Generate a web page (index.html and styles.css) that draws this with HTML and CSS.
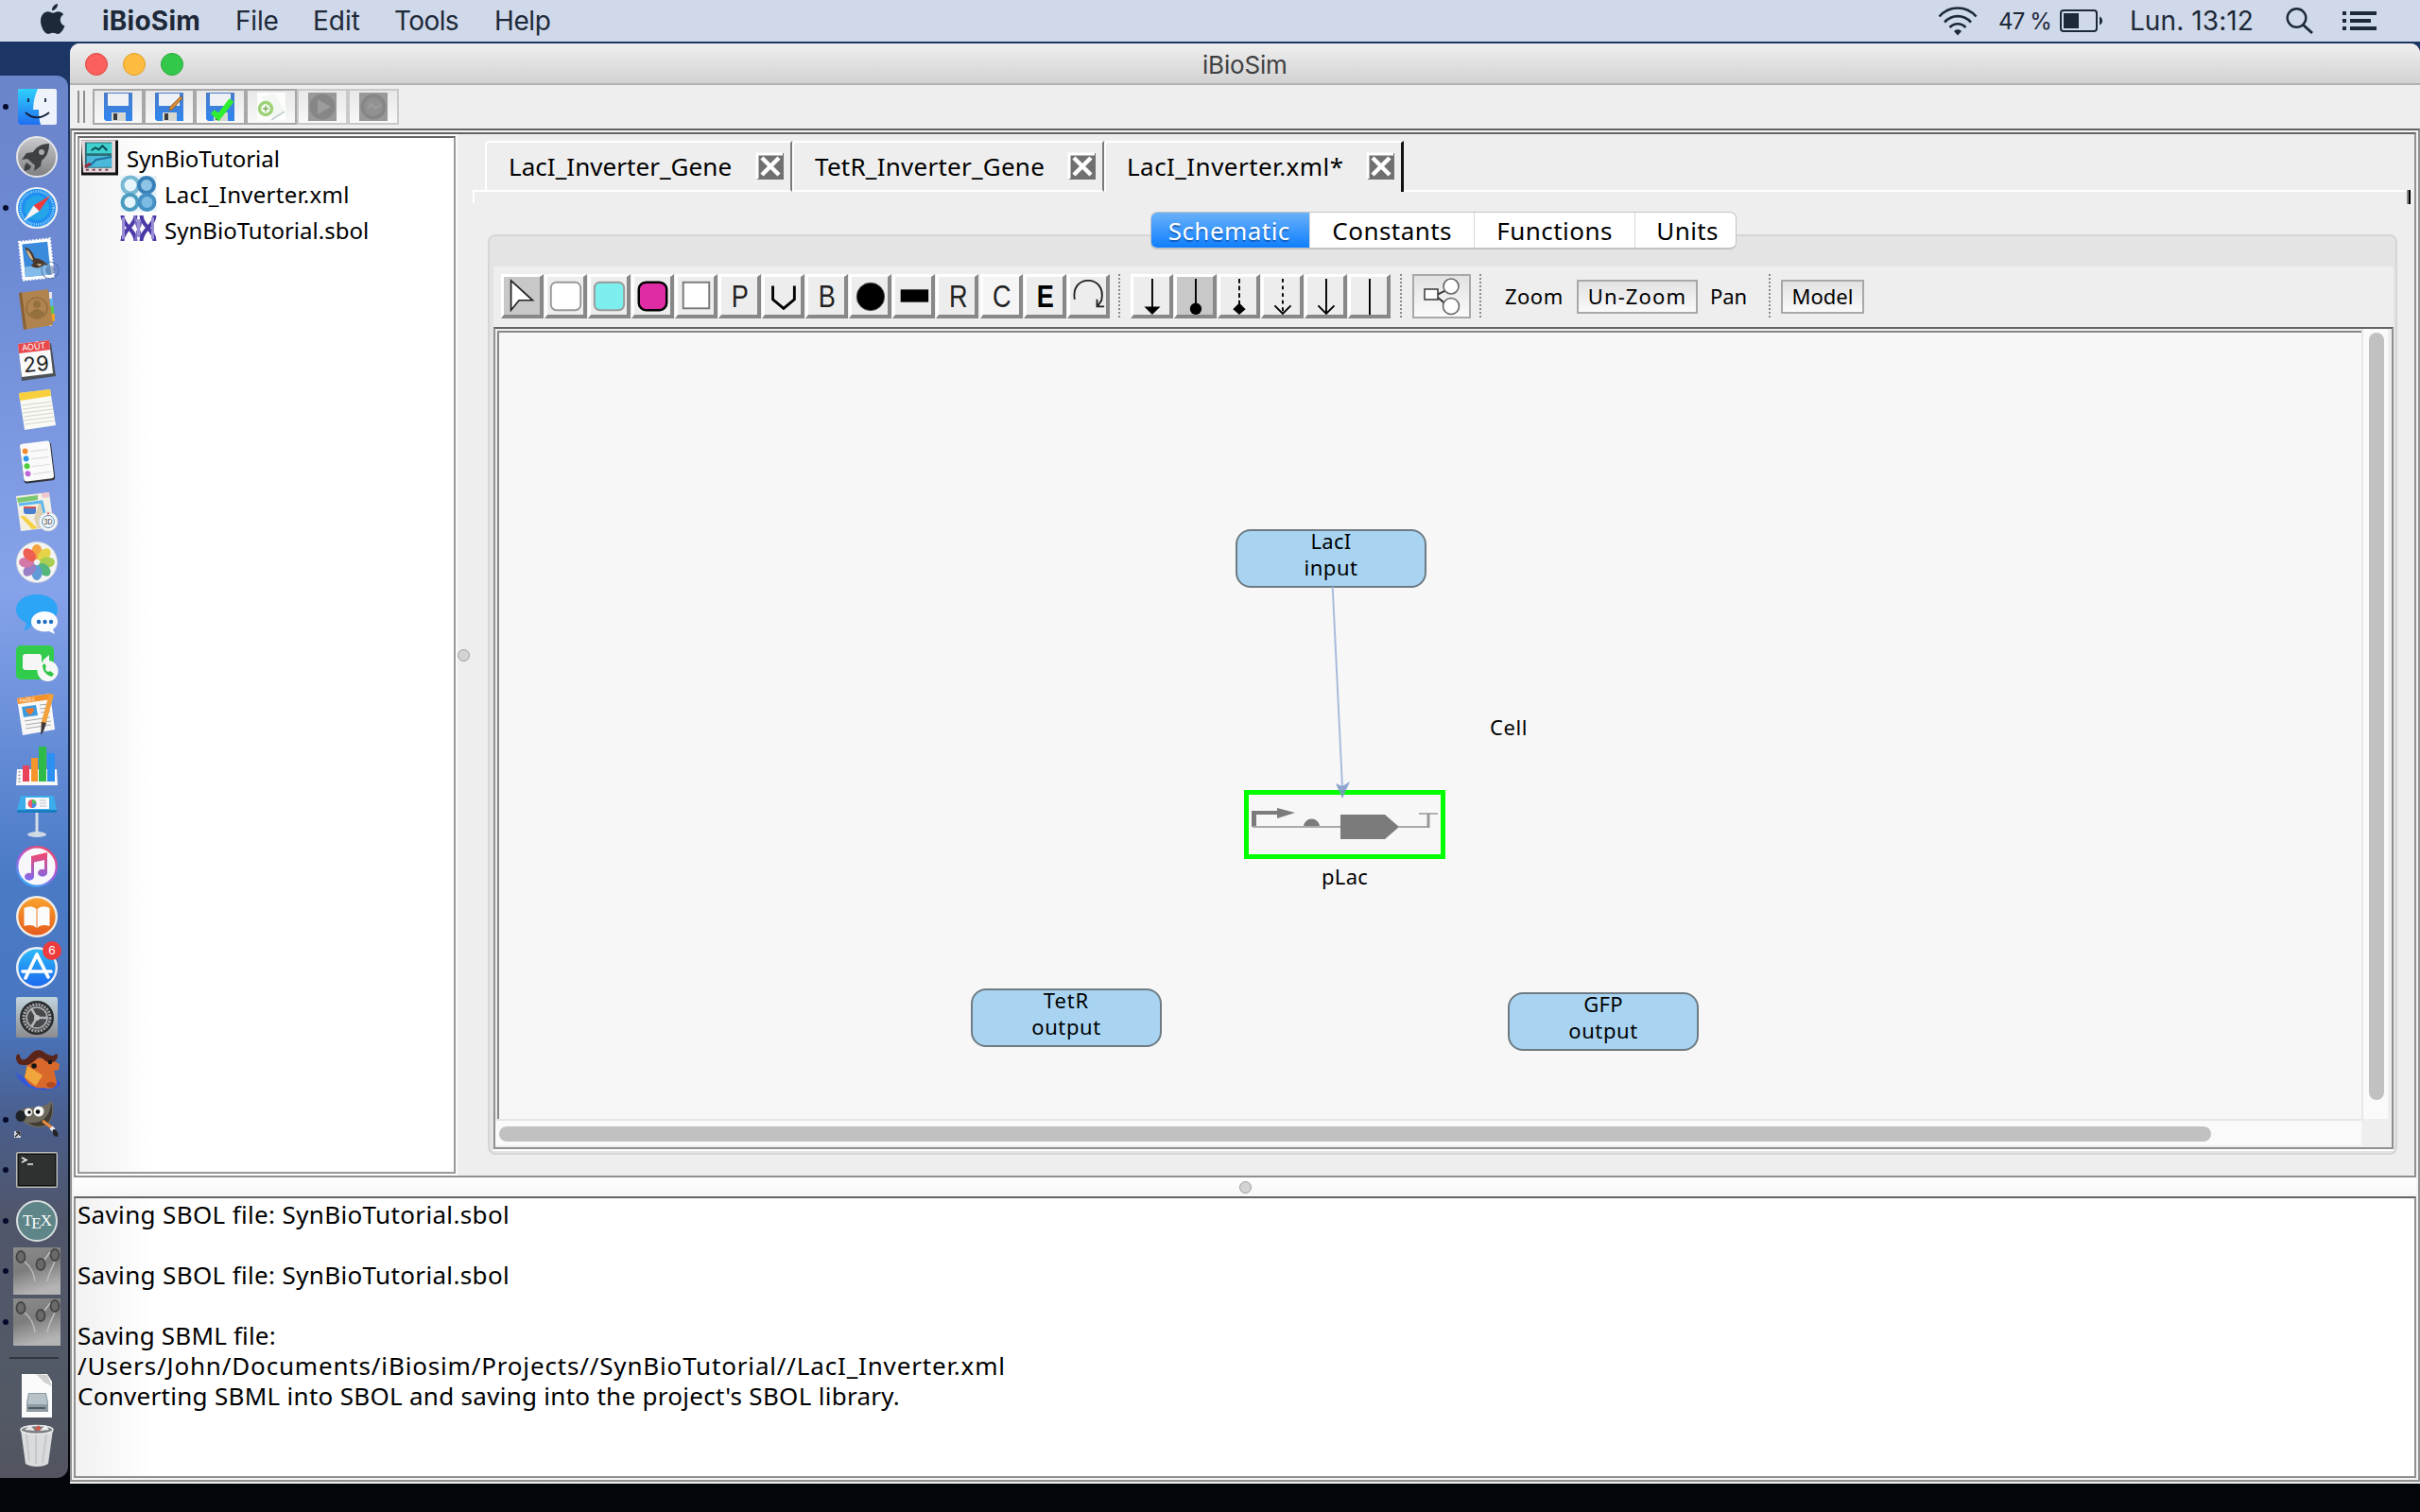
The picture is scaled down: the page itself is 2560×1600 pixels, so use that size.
FILE: index.html
```html
<!DOCTYPE html>
<html lang="en">
<head>
<meta charset="utf-8">
<title>iBioSim</title>
<link rel="stylesheet" href="styles.css">
</head>
<body>
<header class="menubar">
  <svg class="apple" viewBox="0 0 26 32"><path d="M18 0c.4 3.600-2.600 7-6 7.200C11.500 3.800 14.800.4 18 0zM18.500 8.300c2.300 0 4.400 1.200 5.700 3-5.200 3.200-4.200 10.200 1.300 12.300C24 27.600 21 32 18.300 32c-2 0-2.800-1.200-5.200-1.200S9.800 32 8 32C4.200 32 0 24.500 0 18.300 0 12 3.800 8.300 7.600 8.300c2.300 0 4 1.500 5.500 1.500s3.100-1.500 5.400-1.500z"/></svg>
  <span class="m m-app">iBioSim</span>
  <span class="m m-file">File</span>
  <span class="m m-edit">Edit</span>
  <span class="m m-tools">Tools</span>
  <span class="m m-help">Help</span>
  <svg class="wifi" viewBox="0 0 42 32"><g fill="none" stroke="#1d2838" stroke-width="2.600"><path d="M1.500 11.500C12-.5 30-.5 40.500 11.500"/><path d="M7 17.500c8-8.500 20-8.500 28 0"/><path d="M12.500 23c5-5 12-5 17 0"/></g><path d="M17 27c2-2.500 6-2.500 8 0l-4 4.500z" fill="#1d2838"/></svg>
  <span class="m m-pct">47 %</span>
  <svg class="battery" viewBox="0 0 46 24"><rect x="1" y="1" width="38" height="22" rx="3" fill="none" stroke="#1d2838" stroke-width="2"/><rect x="4" y="4" width="16" height="16" fill="#1d2838"/><path d="M42 7.500c4 1 4 8 0 9z" fill="#1d2838"/></svg>
  <span class="m m-clock">Lun. 13:12</span>
  <svg class="search" viewBox="0 0 30 28"><circle cx="11.500" cy="11" r="9.800" fill="none" stroke="#1d2838" stroke-width="2.400"/><path d="M18 18l10 9" stroke="#1d2838" stroke-width="3"/></svg>
  <svg class="list" viewBox="0 0 36 20"><path d="M0 2h4M8 2h28M0 10h4M8 10h22M0 18h4M8 18h28" stroke="#1d2838" stroke-width="4"/></svg>
</header>

<div class="desktop">
<nav class="dock">
  <div class="slot run"><svg viewBox="0 0 46 46"><defs><linearGradient id="fa" x1="0" y1="0" x2="0" y2="1"><stop offset="0" stop-color="#2fd0fb"/><stop offset="1" stop-color="#1f6ff0"/></linearGradient></defs><rect x="3" y="4" width="41" height="38" rx="2" fill="#eef3fb"/><path d="M5 4h19c-3 6-4.500 13-5 22h6c0 6 .5 11 2 16H5a2 2 0 0 1-2-2V6a2 2 0 0 1 2-2z" fill="url(#fa)"/><path d="M14 14v4M32 14v4M11 29c7 7 17 7 25 0" stroke="#14213c" stroke-width="1.800" fill="none"/></svg></div>
  <div class="slot"><svg viewBox="0 0 46 46"><defs><linearGradient id="la" x1="0" y1="0" x2="0" y2="1"><stop offset="0" stop-color="#c9cbcc"/><stop offset="1" stop-color="#7d7f80"/></linearGradient></defs><circle cx="23" cy="23" r="21" fill="url(#la)" stroke="#e4e6e8" stroke-width="2"/><path d="M36 9c-9 0-14 4-17 9l-7 1-5 7 6-1 8 7-1 6 7-5 1-6c5-4 8-9 8-18z" fill="#3e4143"/><circle cx="28" cy="18" r="3" fill="#a8aaab"/><path d="M12 29l5 4c-1 4-4 4-7 5-1-3 0-6 2-9z" fill="#3e4143"/></svg></div>
  <div class="slot run"><svg viewBox="0 0 46 46"><circle cx="23" cy="23" r="21" fill="#1e8ff0" stroke="#eceff3" stroke-width="2.200"/><circle cx="23" cy="23" r="13" fill="#28aee6" opacity=".7"/><circle cx="23" cy="23" r="17.500" fill="none" stroke="#bfe3fb" stroke-width="2.500" stroke-dasharray=".8 1.500"/><path d="M37 10L19.500 20.500l6 6z" fill="#ef3a3a"/><path d="M9 37l10.500-16.500 6 6z" fill="#f4f4f4"/></svg></div>
  <div class="slot"><svg viewBox="0 0 46 46"><g transform="rotate(-6 23 23)"><rect x="6" y="3" width="33" height="41" fill="#fff" stroke="#fff" stroke-width="2" stroke-dasharray="2 1.500"/><rect x="9" y="6" width="27" height="35" fill="#3b8bdc"/><path d="M9 30h27v11H9z" fill="#83bbea"/><path d="M12 9c6 3 8 9 9 13 5 0 10 5 14 9-4-1-6-1-9 1-4 1-8 0-10-3 2-1 3-2 3-3-3-4-7-9-7-17z" fill="#4a3a2c"/><path d="M13 12c4 3 5 8 6 11l-1 1c-3-3-5-7-5-12zM22 28l6 1-3 2z" fill="#cdb894"/></g><circle cx="37" cy="35" r="9" fill="none" stroke="#4d6a9a" stroke-width="1.200" opacity=".7"/><circle cx="37" cy="35" r="5" fill="#3f5f96" opacity=".5"/></svg></div>
  <div class="slot"><svg viewBox="0 0 46 46"><path d="M36 5h3v36h-3z" fill="#e8e8e8"/><path d="M36 12h4v8h-4z" fill="#63b6ee"/><path d="M36 20h5v8h-5z" fill="#5ac84a"/><path d="M36 28h6v8h-6z" fill="#f3a224"/><path d="M4 6l31-4 5 38-31 5z" fill="#b0834f"/><path d="M4 6l3-1 5 39-3 1z" fill="#8a6237"/><circle cx="23" cy="22" r="11" fill="none" stroke="#94703f" stroke-width="1.500"/><circle cx="23" cy="18" r="4" fill="#94703f"/><path d="M15 28c2-3 5-3 6-5h4c1 2 4 2 6 4-4 7-12 7-16 1z" fill="#94703f"/></svg></div>
  <div class="slot"><svg viewBox="0 0 46 46"><path d="M4 10l34-5 5 35-36 5z" fill="#4b5156"/><path d="M3 6l33-4 4 35-33 4z" fill="#fafafa"/><path d="M3 6l33-4 1 10-33 4z" fill="#e8474c"/><text x="20" y="12" class="cal-m" transform="rotate(-6 20 12)">AOÛT</text><text x="22.500" y="35" class="cal-d" transform="rotate(-6 22 30)">29</text></svg></div>
  <div class="slot"><svg viewBox="0 0 46 46"><path d="M4 5l33-4 6 38-33 5z" fill="#fafaf5"/><path d="M4 5l33-4 1 7-33 5z" fill="#f8cf3c"/><path d="M7 18l31-4M8 22l31-4M8 26l32-4M9 30l31-4M9 34l32-4M10 38l32-4" stroke="#d3d3cf" stroke-width="1"/></svg></div>
  <div class="slot"><svg viewBox="0 0 46 46"><g transform="rotate(-7 23 23)"><rect x="7" y="4" width="33" height="41" rx="3" fill="#2e3136"/><rect x="7" y="3" width="32" height="40" rx="3" fill="#fafafa"/><path d="M17 12h19M17 20h19M17 28h19M17 36h19" stroke="#d7d7d7"/><circle cx="12" cy="11" r="3" fill="#f58b2a"/><circle cx="12" cy="19" r="3" fill="#2a98e8"/><circle cx="12" cy="27" r="3" fill="#4ccf3b"/><circle cx="12" cy="35" r="3" fill="#bd66da"/></g></svg></div>
  <div class="slot"><svg viewBox="0 0 46 46"><path d="M1 6l35-4 5 37-35 4z" fill="#f3efe4"/><path d="M2 8l22-3v5L3 13z" fill="#7cc770"/><path d="M28 3l8-1v5l-7 1z" fill="#f2c4cc"/><path d="M4 15l24-3 7 29" stroke="#5cb7ee" stroke-width="3" fill="none"/><path d="M25 14l-5 16 4 10 8-1-5-25z" fill="#dcd0ae"/><path d="M5 27l5 0 14 13-6 1z" fill="#f5d044"/><rect x="9" y="17" width="13" height="8" rx="3" fill="#4a7fd0"/><path d="M9 17h13v2H9z" fill="#d9534d"/><circle cx="35" cy="33" r="10" fill="#f5f7f8" stroke="#ccd2d6"/><circle cx="35" cy="33" r="6.500" fill="none" stroke="#5b8fb4"/><circle cx="35" cy="24.500" r="1" fill="#e33"/><text x="35" y="35.800" class="tiny">3D</text></svg></div>
  <div class="slot"><svg viewBox="0 0 46 46"><circle cx="23" cy="23" r="21.500" fill="#f4f4f4" stroke="#cfd4dc"/><g opacity=".88"><ellipse cx="23" cy="12" rx="5.500" ry="8" fill="#f79a28"/><ellipse cx="23" cy="12" rx="5.500" ry="8" fill="#e3cf31" transform="rotate(45 23 23)"/><ellipse cx="23" cy="12" rx="5.500" ry="8" fill="#9ecb3b" transform="rotate(90 23 23)"/><ellipse cx="23" cy="12" rx="5.500" ry="8" fill="#3fae6b" transform="rotate(135 23 23)"/><ellipse cx="23" cy="12" rx="5.500" ry="8" fill="#4c8fd4" transform="rotate(180 23 23)"/><ellipse cx="23" cy="12" rx="5.500" ry="8" fill="#8c6fc0" transform="rotate(225 23 23)"/><ellipse cx="23" cy="12" rx="5.500" ry="8" fill="#d0679d" transform="rotate(270 23 23)"/><ellipse cx="23" cy="12" rx="5.500" ry="8" fill="#ee4a3c" transform="rotate(315 23 23)"/></g></svg></div>
  <div class="slot"><svg viewBox="0 0 46 46"><path d="M23 3c13 0 22 7 22 16S36 35 23 35c-2 0-4 0-5-.500-2 4-5 6-9 7 2-3 3-6 2-9C5 30 1 25 1 19 1 10 10 3 23 3z" fill="#2da5f6"/><path d="M31 21c8 0 14 4.500 14 11 0 3-2 6-5 8l2 5-6-3c-12 2-19-4-19-10s6-11 14-11z" fill="#fafcff"/><circle cx="25" cy="32" r="2.200" fill="#1c6dc0"/><circle cx="31.500" cy="32" r="2.200" fill="#1c6dc0"/><circle cx="38" cy="32" r="2.200" fill="#1c6dc0"/></svg></div>
  <div class="slot"><svg viewBox="0 0 46 46"><rect x="1" y="4" width="40" height="36" rx="5" fill="#32cc4c"/><rect x="8" y="13" width="20" height="17" rx="3" fill="#f6f6f6"/><path d="M29 20l7-6v14z" fill="#f6f6f6"/><circle cx="34.500" cy="31" r="11" fill="#f6f8f6"/><path d="M29 25c0 7 5 11 10 12l2-3-4-3-2 1c-2-1-3-2-3-4l1-2-2-3z" fill="#2fc448"/></svg></div>
  <div class="slot"><svg viewBox="0 0 46 46"><path d="M2 6l35-5 5 38-34 6z" fill="#f7f7f7"/><path d="M2 6l35-5 1 6-35 5z" fill="#f5912a"/><text x="13" y="9.500" class="pg" transform="rotate(-7 13 9)">PAGES</text><path d="M7 15l15-2 2 11-15 2z" fill="#3b9bdc"/><path d="M11 17l8-1 1 3-4 5-4-4z" fill="#f0762a"/><path d="M26 13l10-1M26 17l11-1M27 21l10-1M10 30l27-4M11 34l27-4M11 38l27-4" stroke="#a9a9a9"/><path d="M36 1l5 1-9 33-5-1z" fill="#f3a13c"/><path d="M28 31l5 1-3 9-3 4z" fill="#3b3b3b"/></svg></div>
  <div class="slot"><svg viewBox="0 0 46 46"><path d="M2 27h42l1 17H1z" fill="#f8f8f8"/><path d="M4.500 29v14" stroke="#999" stroke-width="2" stroke-dasharray="1.500 2"/><rect x="8" y="23" width="7" height="17" fill="#e9435c"/><rect x="17" y="15" width="7" height="25" fill="#f5952c"/><rect x="25" y="3" width="8" height="37" fill="#2fbb49"/><rect x="34" y="10" width="8" height="30" fill="#2c8ff2"/></svg></div>
  <div class="slot"><svg viewBox="0 0 46 46"><ellipse cx="23" cy="43" rx="10" ry="3" fill="#cfd9e4"/><rect x="21.500" y="19" width="3" height="24" fill="#d4dde8"/><path d="M6 2h35l3 15H2z" fill="#3dacea"/><path d="M2 17h42v3H2z" fill="#1a7dc2"/><rect x="11" y="4" width="25" height="12" fill="#f8fafc"/><circle cx="18" cy="10.500" r="4.500" fill="#ee5a6a"/><path d="M18 6v4.500h4.500A4.500 4.500 0 0 0 18 6z" fill="#47c35b"/><path d="M18 15a4.500 4.500 0 0 0 4.500-4.500H18z" fill="#3a8df0"/><path d="M26 7h7M26 10h7M26 13h7" stroke="#b8bfc8"/></svg></div>
  <div class="slot"><svg viewBox="0 0 46 46"><defs><linearGradient id="it" x1=".8" y1="0" x2=".3" y2="1"><stop offset="0" stop-color="#f0475f"/><stop offset=".5" stop-color="#b258e0"/><stop offset="1" stop-color="#35a8f5"/></linearGradient><linearGradient id="nt" x1="0" y1="0" x2="0" y2="1"><stop offset="0" stop-color="#f7466a"/><stop offset="1" stop-color="#7a6cf2"/></linearGradient></defs><circle cx="23" cy="23" r="20.800" fill="#f8f7fb" stroke="url(#it)" stroke-width="2.400"/><path d="M17 12l17-4v22a5 4 0 1 1-3-4V16l-11 2.500V34a5 4 0 1 1-3-4z" fill="url(#nt)"/></svg></div>
  <div class="slot"><svg viewBox="0 0 46 46"><defs><linearGradient id="ib" x1="0" y1="0" x2="0" y2="1"><stop offset="0" stop-color="#f9a42c"/><stop offset="1" stop-color="#e5591d"/></linearGradient></defs><circle cx="23" cy="23" r="20.800" fill="url(#ib)" stroke="#f0ece8" stroke-width="2.400"/><path d="M22.500 15c-4-4-9-3-13-1v19c4-1 9-2 13 2zM23.500 15c4-4 9-3 13-1v19c-4-1-9-2-13 2z" fill="#fbfbfb"/></svg></div>
  <div class="slot"><svg viewBox="0 0 46 46"><defs><linearGradient id="as" x1="0" y1="0" x2="0" y2="1"><stop offset="0" stop-color="#2dbdf8"/><stop offset="1" stop-color="#1c66f0"/></linearGradient></defs><circle cx="23" cy="23" r="20.800" fill="url(#as)" stroke="#eef0f4" stroke-width="2.400"/><path d="M23 9L11 34M23 9l12 24M8 27h30" stroke="#fff" stroke-width="3.600" stroke-linecap="round"/></svg><b class="badge">6</b></div>
  <div class="slot"><svg viewBox="0 0 46 46"><defs><linearGradient id="sp" x1="0" y1="0" x2="0" y2="1"><stop offset="0" stop-color="#c3d5de"/><stop offset="1" stop-color="#8b8d8f"/></linearGradient></defs><rect x="1" y="1" width="44" height="43" rx="2" fill="url(#sp)"/><circle cx="23" cy="23" r="18" fill="#2a2c2e"/><circle cx="23" cy="23" r="14" fill="#3c3f42" stroke="#a5a8aa" stroke-width="3" stroke-dasharray="2 1.200"/><circle cx="23" cy="23" r="11" fill="#46494c" stroke="#b5b8ba" stroke-width="1.500"/><path d="M23 23h11M23 23l-6-10M23 23l-6 10" stroke="#b5b8ba" stroke-width="2.500"/><circle cx="23" cy="23" r="3" fill="#c0c3c5"/></svg></div>
  <div class="slot"><svg viewBox="0 0 46 46"><path d="M0 26c4 12 14 18 26 19s20-1 22-7l-3-3c-10 4-35 2-45-9z" fill="#3558d8"/><path d="M13 16c5-5 13-5 19-3l7 1 8 4-1 6-5 1 3 12c0 7-8 8-14 6-8 2-16-3-20-11z" fill="#d9692b"/><path d="M13 20l-3 12 12 9 7-11z" fill="#f0a63d"/><path d="M2 15C-1 9 4 5 5 9c1 7 7 5 11-1 4-5 10-6 14-3 5 4 11 6 13 2 4 0 2 10-6 9-6 0-8-6-12-5-5 3-8 9-15 8-5 0-7-1-8-4z" fill="#5a2418"/><circle cx="20" cy="20" r="2.800" fill="#161616"/><circle cx="37" cy="16" r="2.300" fill="#161616"/><ellipse cx="38" cy="40" rx="5" ry="3" fill="#b04a1e"/></svg></div>
  <div class="slot run"><svg viewBox="0 0 46 46"><path d="M2 14c5-2 9-4 14-4 8 0 16-1 23-7 3 8 1 20-5 26-8 4-20 2-26-5z" fill="#6e6a5e"/><path d="M38 5c3 10 0 20-7 24-7 2-13 0-18-3 14 2 24-5 25-21z" fill="#3f3c35"/><ellipse cx="6" cy="19" rx="5.500" ry="6" fill="#1f2329"/><circle cx="14" cy="15" r="4.200" fill="#f5f5f5"/><circle cx="25" cy="14" r="5.500" fill="#f5f5f5"/><circle cx="15" cy="15" r="1.700"/><circle cx="24" cy="14.500" r="2.200"/><path d="M29 24l12 9" stroke="#e98a3d" stroke-width="3"/><path d="M38 31l3 3" stroke="#eee" stroke-width="4"/><path d="M40 33c4 0 6 4 5 8-4 0-6-3-5-8z" fill="#222"/><path d="M-1 35h7v7h-7z" fill="#cfd3da"/><path d="M0 41l4-4M1 36h4v4" stroke="#222" stroke-width="1.300" fill="none"/></svg></div>
  <div class="slot run"><svg viewBox="0 0 46 46"><rect x="1" y="4" width="44" height="38" rx="2" fill="#b9bcbd"/><rect x="2.500" y="5.500" width="41" height="35" fill="#111"/><rect x="4" y="7" width="38" height="32" fill="#2f3131"/><path d="M7 10l5 2.500-5 2.500M13 17h6" stroke="#f1f1f1" stroke-width="1.500" fill="none"/></svg></div>
  <div class="slot run"><svg viewBox="0 0 46 46"><circle cx="23" cy="23" r="21" fill="#5e8588" stroke="#d8dfe0" stroke-width="2"/><text x="23" y="28" class="tex">T<tspan dy="3">E</tspan><tspan dy="-3">X</tspan></text></svg></div>
  <div class="slot run"><svg viewBox="0 0 46 46"><use href="#photo"/></svg></div>
  <div class="slot run"><svg viewBox="0 0 46 46"><defs><linearGradient id="ph" x1="0" y1="0" x2=".3" y2="1"><stop offset="0" stop-color="#8c8c8c"/><stop offset=".5" stop-color="#7c7c7c"/><stop offset="1" stop-color="#b4b4b4"/></linearGradient><g id="photo"><rect x="-2" y="-2" width="50" height="50" fill="url(#ph)"/><g fill="#6a6a6a" stroke="#454545" stroke-width="1.800"><ellipse cx="6" cy="8" rx="4.500" ry="6"/><ellipse cx="27" cy="16" rx="4.500" ry="6"/><ellipse cx="42" cy="6" rx="4.500" ry="6"/></g><path d="M10 13c6 5 10 12 11 21M42 13c-3 7-7 13-8 21M31 11l6-8" stroke="#bdbdbd" stroke-width="1.500" fill="none"/></g></defs><use href="#photo"/></svg></div>
  <hr class="dock-line">
  <div class="slot"><svg viewBox="0 0 46 46"><path d="M7 0h27l5 8v38H7z" fill="#fbfbfb"/><path d="M22 0l12 1 5 12-8-4z" fill="#d0d0d0"/><path d="M14 20h19l2 10v10H12V30z" fill="#8e9ba3"/><path d="M15 21h17l2 11H13z" fill="#b8c3c9"/><path d="M14 36h18" stroke="#3e464b" stroke-width="1.500"/></svg></div>
  <div class="slot"><svg viewBox="0 0 46 46"><path d="M6 6l34 0-5 36c-6 4-18 4-24 0z" fill="#d9dbdc"/><path d="M12 10l3 30M22 11v31M33 10l-4 31" stroke="#c6c9cb" stroke-width="2"/><ellipse cx="23" cy="6" rx="17" ry="4.500" fill="#7c8084" stroke="#eee" stroke-width="1.500"/><path d="M10 6l6-5 5 6z" fill="#e7e7e7"/><path d="M20 6l5-5 3 6z" fill="#d05a48"/><path d="M26 7l6-6 4 5z" fill="#f0f0f0"/></svg></div>
</nav>

<main class="window">
  <div class="titlebar"><i class="red"></i><i class="yellow"></i><i class="green"></i><span class="win-title">iBioSim</span></div>
  <div class="filebar">
    <span class="grip"></span>
    <div class="fb"><svg viewBox="0 0 30 30"><defs><linearGradient id="fl" x1="0" y1="0" x2="0" y2="1"><stop offset="0" stop-color="#4a7cc8"/><stop offset="1" stop-color="#2f86f0"/></linearGradient></defs><g id="floppy"><path d="M0 0h30v30H2l-2-2z" fill="url(#fl)"/><path d="M4 1h22v13H4z" fill="#eef2f6"/><path d="M8 21h15v9H8z" fill="#d8d8d2"/><path d="M10 22h4v7h-4z" fill="#3c3c3c"/></g></svg></div>
    <div class="fb"><svg viewBox="0 0 30 30"><use href="#floppy"/><path d="M27 4l2 2-11 12-3 1 1-4z" fill="#d98d3a" stroke="#8f6530"/></svg></div>
    <div class="fb"><svg viewBox="0 0 30 30"><use href="#floppy"/><path d="M7 20l6 6L27 8" stroke="#2fee2f" stroke-width="6" fill="none"/></svg></div>
    <div class="fb"><svg viewBox="0 0 30 30"><rect width="30" height="30" fill="#fdfefc"/><path d="M4 4l14-3 11 18-12 9z" fill="#f3f7f1"/><path d="M15 29l14-9" stroke="#c3cdd1" stroke-width="1.500"/><circle cx="9" cy="17" r="6.500" fill="none" stroke="#9ed277" stroke-width="3.500"/><path d="M6 17h6M9 14v6" stroke="#7cae5a" stroke-width="1.500"/></svg></div>
    <div class="fb off"><svg viewBox="0 0 30 30"><rect width="30" height="30" fill="#999"/><circle cx="15" cy="15" r="13.500" fill="#868686"/><path d="M10 7l14 8-14 8z" fill="#9c9c9c"/></svg></div>
    <div class="fb off"><svg viewBox="0 0 30 30"><rect width="30" height="30" fill="#999"/><circle cx="15" cy="15" r="13.500" fill="#868686"/><circle cx="15" cy="15" r="10" fill="#919191"/><path d="M9 16l4-4 4 5 5-4" stroke="#9f9f9f" stroke-width="2" fill="none"/></svg></div>
  </div>

  <div class="frame">
    <section class="split">
      <aside class="tree">
        <div class="node"><svg viewBox="0 0 40 38"><path d="M0 0h40v38H0z" fill="#111"/><path d="M0 0h37v35H2z" fill="#e8d9dc"/><path d="M4 2h29v28H4z" fill="#2d6f78"/><path d="M6 3h27v11H6z" fill="#3fd0cf"/><path d="M6 17h27v12H6z" fill="#4ab9dc"/><path d="M11 11l4-3 4 2 4-4 5 5" stroke="#0c4a52" stroke-width="2" fill="none"/><path d="M6 27h4l6-6 6-1 11-2" stroke="#1f6f9a" stroke-width="2" fill="none"/><path d="M4 29l6-4" stroke="#a02838" stroke-width="3"/><path d="M5 32h28" stroke="#7a4450" stroke-width="2" stroke-dasharray="3 4"/></svg><span class="t-root">SynBioTutorial</span></div>
        <div class="node kid"><svg viewBox="0 0 38 38"><rect width="38" height="38" fill="#e4f2f9"/><g fill="#e6f5fb" stroke-width="4"><circle cx="10.500" cy="10" r="8.500" stroke="#79b8d2"/><circle cx="27.500" cy="10" r="8" fill="#8cc4e8" stroke="#3a80b8"/><circle cx="10" cy="28" r="8" stroke="#4a9cc0"/><circle cx="28" cy="28" r="8" fill="#7cbce2" stroke="#4390c4"/></g></svg><span class="t-xml">LacI_Inverter.xml</span></div>
        <div class="node kid"><svg viewBox="0 0 38 38"><g fill="none" stroke-width="4"><path d="M2 4c0 11 14 15 14 27M16 4C16 15 2 19 2 31" stroke="#4a3aa8"/><path d="M15 4c0 11 7 15 7 27M23 4c0 11-7 15-7 27" stroke="#7a70c4" stroke-width="2.500"/><path d="M22 4c0 11 14 15 14 27M36 4c0 11-14 15-14 27" stroke="#4a3aa8"/></g><path d="M3 6v23M34 6v23M19 8v19" stroke="#9a8ed6" stroke-width="3"/></svg><span class="t-sbol">SynBioTutorial.sbol</span></div>
      </aside>
      <div class="vsplit"><i class="knob"></i></div>
      <section class="work">
        <div class="tabs">
          <span class="gap-l"></span>
          <div class="tab tab1"><span class="t-tab1">LacI_Inverter_Gene</span><svg class="x" viewBox="0 0 28 28"><g id="close"><rect width="28" height="28" fill="#707070"/><path d="M0 27V1h27" stroke="#fff" stroke-width="3" fill="none"/><path d="M5 5l18 18M23 5L5 23" stroke="#fff" stroke-width="4.500"/></g></svg></div>
          <div class="tab tab2"><span class="t-tab2">TetR_Inverter_Gene</span><svg class="x" viewBox="0 0 28 28"><use href="#close"/></svg></div>
          <div class="tab tab3"><span class="t-tab3">LacI_Inverter.xml*</span><svg class="x" viewBox="0 0 28 28"><use href="#close"/></svg></div>
          <span class="gap-r"></span>
        </div>
        <div class="pane">
          <i class="edge-l"></i><i class="edge-r"></i>
          <div class="seg">
            <span class="on"><em class="t-sch">Schematic</em></span><span><em class="t-con">Constants</em></span><span><em class="t-fun">Functions</em></span><span><em class="t-uni">Units</em></span>
          </div>
          <div class="panel">
            <div class="tools">
              <div class="tb sel"><svg viewBox="0 0 40 40"><path d="M8 3v33l9-11h15z" fill="#fff" stroke="#222" stroke-width="1.800"/></svg></div>
              <div class="tb"><svg viewBox="0 0 40 40"><rect x="4" y="5" width="33" height="31" rx="6" fill="#fff" stroke="#999" stroke-width="2"/></svg></div>
              <div class="tb"><svg viewBox="0 0 40 40"><rect x="4" y="5" width="33" height="31" rx="6" fill="#7ceeee" stroke="#999" stroke-width="2"/></svg></div>
              <div class="tb"><svg viewBox="0 0 40 40"><rect x="5" y="5" width="31" height="31" rx="8" fill="#e02ca4" stroke="#000" stroke-width="2.600"/></svg></div>
              <div class="tb"><svg viewBox="0 0 40 40"><rect x="6" y="5" width="29" height="29" fill="#fff" stroke="#777" stroke-width="2"/></svg></div>
              <div class="tb"><span class="let">P</span></div>
              <div class="tb"><svg viewBox="0 0 40 40"><path d="M9 9v15l12 10 12-10V9" fill="none" stroke="#000" stroke-width="3"/></svg></div>
              <div class="tb"><span class="let">B</span></div>
              <div class="tb"><svg viewBox="0 0 40 40"><circle cx="21" cy="21" r="15.500" stroke="#555"/></svg></div>
              <div class="tb"><svg viewBox="0 0 40 40"><rect x="6" y="13" width="31" height="14"/></svg></div>
              <div class="tb"><span class="let">R</span></div>
              <div class="tb lite"><span class="let">C</span></div>
              <div class="tb"><span class="let heavy">E</span></div>
              <div class="tb"><svg viewBox="0 0 40 40"><path d="M5 24C3 11 10 3 20 3s18 8 15 22l-4 6M30 24v8h8" fill="none" stroke="#222" stroke-width="2"/></svg></div>
              <i class="dots d1"></i>
              <div class="tb"><svg viewBox="0 0 40 40"><path d="M21 1v34" stroke="#000" stroke-width="2"/><path d="M12 32h18l-9 9z"/></svg></div>
              <div class="tb sel"><svg viewBox="0 0 40 40"><path d="M21 1v34" stroke="#000" stroke-width="2"/><circle cx="21" cy="34.500" r="6.500"/></svg></div>
              <div class="tb"><svg viewBox="0 0 40 40"><path d="M21 1v34" stroke="#000" stroke-width="2" stroke-dasharray="5 3"/><path d="M21 28l7 7-7 6-7-6z"/></svg></div>
              <div class="tb"><svg viewBox="0 0 40 40"><path d="M21 1v38" stroke="#000" stroke-width="2" stroke-dasharray="4 4"/><path d="M12 31l9 9 9-9" fill="none" stroke="#000" stroke-width="2"/></svg></div>
              <div class="tb"><svg viewBox="0 0 40 40"><path d="M21 1v39M12 31l9 9 9-9" fill="none" stroke="#000" stroke-width="2"/></svg></div>
              <div class="tb"><svg viewBox="0 0 40 40"><path d="M21 1v40" stroke="#000" stroke-width="2"/></svg></div>
              <i class="dots d2"></i>
              <div class="lay"><svg viewBox="0 0 40 40"><path d="M14 18l12-6M14 20l12 10" stroke="#333" stroke-width="2"/><rect x="1" y="12" width="14" height="11" fill="#fff" stroke="#444" stroke-width="1.600"/><circle cx="29" cy="9" r="8" fill="#fff" stroke="#666" stroke-width="1.600"/><circle cx="29" cy="30" r="8.500" fill="#fff" stroke="#666" stroke-width="1.600"/></svg></div>
              <i class="dots d3"></i>
              <span class="lbl l-zoom"><em class="t-zoom">Zoom</em></span>
              <span class="btn b-unz"><em class="t-unz">Un-Zoom</em></span>
              <span class="lbl l-pan"><em class="t-pan">Pan</em></span>
              <i class="dots d4"></i>
              <span class="btn b-mod"><em class="t-mod">Model</em></span>
            </div>
            <div class="canvas">
              <div class="stage">
                <div class="species s1"><em class="t-laci">LacI</em><em class="t-in">input</em></div>
                <div class="species s2"><em class="t-tetr">TetR</em><em class="t-out">output</em></div>
                <div class="species s3"><em class="t-gfp">GFP</em><em class="t-out">output</em></div>
                <div class="promoter"><svg viewBox="0 0 203 63"><g fill="#7b7b7b"><path d="M3 17h27v-3l19 5-19 6v-4H8v13H3z"/><path d="M58 34a8.500 8.500 0 0 1 17 0z"/><path d="M97 21h47l15 13-15 13H97z"/></g><path d="M4 34h93M158 34h33" stroke="#a9a9a9" stroke-width="2" fill="none"/><path d="M190 35V20" stroke="#999" stroke-width="3"/><path d="M180 20h20" stroke="#999" stroke-width="1.500"/></svg></div>
                <svg class="edge" viewBox="0 0 30 226"><path d="M9.700 0L20 212" stroke="#a9bbdc" stroke-width="2"/><path d="M13 208l7 3 8-5-8 18z" fill="#7d98c8" opacity=".85"/></svg>
                <em class="free f-plac">pLac</em>
                <em class="free f-cell">Cell</em>
              </div>
              <div class="vbar"><i></i></div>
              <div class="hbar"><i></i></div>
              <div class="corner"></div>
            </div>
          </div>
        </div>
      </section>
    </section>
    <div class="hsplit"><i class="knob"></i></div>
    <section class="console"><p><span class="t-c1">Saving SBOL file: SynBioTutorial.sbol</span></p><p></p><p><span class="t-c1">Saving SBOL file: SynBioTutorial.sbol</span></p><p></p><p><span class="t-c3">Saving SBML file:</span></p><p><span class="t-c4">/Users/John/Documents/iBiosim/Projects//SynBioTutorial//LacI_Inverter.xml</span></p><p><span class="t-c5">Converting SBML into SBOL and saving into the project's SBOL library.</span></p></section>
  </div>
</main>
</div>
</body>
</html>
```
FILE: styles.css
```css
* { box-sizing: border-box; }
html, body { margin: 0; width: 2560px; height: 1600px; overflow: hidden; }
body { display: flex; flex-direction: column; font-family: "Noto Sans", "Open Sans", sans-serif; font-size: 26px; color: #000;
  background: linear-gradient(#1b3563 0, #1c3766 100px, #16294a 900px, #0a1322 1250px, #020509 1560px, #03070b 1600px); }
em { font-style: normal; }
svg { display: block; overflow: visible; }
p { margin: 0; }

/* menu bar */
.menubar { display: flex; align-items: center; height: 44px; flex: none; background: #cfd9ea; padding-left: 43px; font-family: Inter, sans-serif; font-size: 28px; color: #1d2838; }
.m { white-space: nowrap; flex: none; line-height: 45px; }
.apple { width: 26px; height: 32px; margin: -5px 39px 0 0; fill: #1d2838; }
.m-app { font-weight: 700; width: 141px; letter-spacing: .25px; }
.m-file { width: 82px; letter-spacing: -.2px; }
.m-edit { width: 86px; }
.m-tools { width: 106px; letter-spacing: -.6px; }
.m-help { letter-spacing: -.4px; }
.wifi { width: 42px; height: 32px; margin-left: auto; }
.m-pct { font-size: 24px; margin-left: 22px; letter-spacing: -.9px; }
.battery { width: 46px; height: 24px; margin-left: 9px; }
.m-clock { margin-left: 28px; letter-spacing: .1px; }
.search { width: 30px; height: 28px; margin-left: 34px; }
.list { width: 36px; height: 20px; margin: 0 46px 0 30px; }

/* dock */
.desktop { display: flex; height: 1556px; flex: none; }
.dock { width: 72px; height: 1484px; margin: 36px 2px 0 0; padding-top: 6px; border-radius: 0 12px 12px 0; flex: none;
  background: linear-gradient(#6b85ca 0, #6d8ad4 200px, #86a3ea 540px, #4a7ac6 850px, #4a76c0 1000px, #4a5d8a 1110px, #50566a 1210px, #535a66 1400px, #52545f 1484px); }
.slot { position: relative; display: flex; align-items: center; height: 53.6px; padding-left: 16px; }
.slot svg { width: 46px; height: 46px; flex: none; }
.run::before { content: ""; width: 6px; height: 6px; margin: 0 7px 0 -13px; border-radius: 3px; background: #050a2c; }
.badge { position: absolute; left: 45px; top: -1px; width: 20px; height: 20px; border-radius: 10px; background: #ee3b3d; color: #fff; font: 12px/20px Inter, sans-serif; text-align: center; }
.dock-line { width: 52px; height: 2px; margin: 10px 0 12px 10px; border: 0; background: #34363f; }
.cal-m { font: 9px Inter, sans-serif; fill: #fff; text-anchor: middle; }
.cal-d { font: 22px Inter, sans-serif; fill: #222; text-anchor: middle; }
.tiny { font: 7px Inter, sans-serif; fill: #333; text-anchor: middle; }
.pg { font: 5px Inter, sans-serif; fill: #fff; text-anchor: middle; }
.tex { font: 17px "Liberation Serif", serif; fill: #fff; text-anchor: middle; letter-spacing: -1px; }

/* window chrome */
.window { width: 2486px; height: 1524px; margin-top: 2px; display: flex; flex-direction: column; border-radius: 10px 10px 0 0; overflow: hidden; background: #eee; }
.titlebar { display: flex; align-items: center; height: 44px; flex: none; padding: 2px 0 0 16px; gap: 16px; border-bottom: 2px solid #b2b2b2; background: linear-gradient(#efefef, #d2d2d2); }
.titlebar i { width: 24px; height: 24px; border-radius: 12px; flex: none; border: 1px solid; }
.titlebar .red { background: #fb605c; border-color: #de4743; }
.titlebar .yellow { background: #fdbc40; border-color: #dfa023; }
.titlebar .green { background: #34c84a; border-color: #27a93b; }
.win-title { font-family: Inter, sans-serif; font-size: 26px; color: #404040; margin: 1px 0 0 1062px; white-space: nowrap; letter-spacing: -.2px; }
.filebar { display: flex; height: 46px; flex: none; padding: 4px 0 0 8px; background: #eee; }
.grip { width: 8px; height: 34px; margin: 2px 8px 0 0; border: solid #8d8d8d; border-width: 0 2px; }
.fb { width: 54px; height: 38px; border: 2px solid #a8a8a8; display: flex; padding-left: 10px; padding-top: 2px; background: linear-gradient(#e8e8e8, #f8f8f8); }
.fb svg { width: 30px; height: 30px; }
.off { border-color: #c9c9c9; }

.frame { height: 1432px; display: flex; flex-direction: column; padding: 2px; border: 2px solid #909090; border-top-color: #636363; background: #f3f3f3; }
.split { display: flex; height: 1106px; flex: none; border: 2px solid #909090; border-top-color: #636363; background: #eee; }

/* project tree */
.tree { width: 400px; margin: 2px 0 2px 2px; border: 2px solid #999; border-top-color: #666; background: linear-gradient(90deg, #f2f2f2, #fff 80px); padding: 2px; box-shadow: 0 0 0 2px #fafafa; font-size: 24px; }
.node { display: flex; align-items: center; height: 38px; }
.node svg { width: 39px; height: 38px; margin-right: 9px; flex: none; }
.kid { padding-left: 41px; }
.kid svg { margin-right: 8px; }
.node span, .tab span { white-space: nowrap; }
.t-root { letter-spacing: -.05px; }
.t-xml { letter-spacing: .28px; }
.t-sbol { letter-spacing: .02px; }
.vsplit { width: 17px; display: flex; align-items: center; justify-content: center; }
.knob { width: 13px; height: 13px; border-radius: 7px; border: 1px solid #9d9d9d; background: #d3d3d3; }

/* document tabs */
.work { width: 2053px; padding-left: 1px; display: flex; flex-direction: column; }
.tabs { display: flex; height: 54px; margin-top: 7px; }
.gap-l { width: 13px; border-bottom: 2px solid #fff; }
.gap-r { flex: 1; border-bottom: 2px solid #fff; }
.tab { display: flex; align-items: center; justify-content: space-between; border: 2px solid #fff; border-right-color: #7a7a7a; border-radius: 4px 0 0 0; }
.tab1 { width: 325px; padding: 0 7px 0 23px; }
.tab2 { width: 330px; padding: 0 7px 0 22px; }
.tab3 { width: 317px; padding: 0 7px 2px 22px; border-bottom: 0; border-right: 3px solid #111; }
.t-tab1 { letter-spacing: .05px; }
.t-tab2 { letter-spacing: .25px; }
.t-tab3 { letter-spacing: .46px; }
.x { width: 28px; height: 28px; flex: none; }
.pane { position: relative; }
.edge-l { position: absolute; left: 0; top: 0; width: 2px; height: 12px; background: #fff; }
.edge-r { position: absolute; right: 2px; top: -2px; width: 4px; height: 15px; background: #000; border-left: 2px solid #888; }

/* view switch */
.seg { position: relative; z-index: 1; display: flex; width: 620px; height: 40px; margin: 21px 0 0 717px; border-radius: 7px; overflow: hidden; background: #fff; border: solid #c4c4c4; border-width: 1px 1px 2px; }
.seg span { display: flex; align-items: center; justify-content: center; border-left: 1px solid #d8d8d8; width: 171px; padding-top: 1px; }
.seg span:nth-child(2) { width: 174px; }
.seg span:nth-child(4) { width: 107px; padding-left: 4px; }
.seg .on { width: 169px; margin: -1px 0 -2px -1px; padding: 0 2px 0 0; border: 0; color: #fff; background: linear-gradient(#6cb3fa, #0a7cff); text-shadow: 0 2px 1px rgba(0,50,120,.5); }
.t-sch, .t-con, .t-fun { letter-spacing: .45px; }
.t-uni { letter-spacing: .4px; }

.panel { width: 2020px; height: 974px; margin: -16px 0 0 16px; padding: 32px 2px 2px 4px; border: 2px solid #d6d6d6; border-radius: 8px; background: #e4e4e4; }

/* drawing tools */
.tools { display: flex; height: 64px; padding: 8px 0 0 8px; background: #eee; }
.tb { width: 45px; height: 47px; margin-right: 1.060px; flex: none; border: solid; border-width: 3px 4px 4px 3px; border-color: #fff #888 #888 #fff; display: flex; justify-content: center; background: #ededed; }
.tb svg { width: 38px; height: 40px; flex: none; }
.sel { background: #c8c8c8; }
.lite { background: #f5f5f5; }
.let { font: 33px/42px "Liberation Sans", sans-serif; color: #222; transform: scaleX(.82); padding-left: 2px; }
.heavy { font-weight: 700; color: #000; }
.dots { width: 0; height: 46px; border-left: 2px dotted #8a8a8a; flex: none; }
.d1 { margin: 0 11px 0 8px; }
.d2 { margin: 0 11px 0 9px; }
.d3 { margin-left: 9px; }
.d4 { margin: 0 11px 0 24px; }
.lay { width: 62px; height: 47px; border: 2px solid #a8a8a8; padding: 2px 10px; background: linear-gradient(#e2e2e2, #fafafa); flex: none; }
.lay svg { width: 40px; height: 40px; }
.lbl, .btn { font-size: 22px; line-height: 31px; height: 36px; margin-top: 6px; white-space: nowrap; flex: none; padding-top: 2px; }
.btn { border: 2px solid #a8a8a8; background: linear-gradient(#e2e2e2, #fafafa); text-align: center; padding: 0; }
.l-zoom { width: 101px; padding-left: 25px; }
.b-unz { width: 128px; }
.l-pan { width: 51px; padding-left: 13px; }
.b-mod { width: 88px; }
.t-zoom { letter-spacing: .5px; }
.t-unz { letter-spacing: 1.1px; }
.t-pan { letter-spacing: 0; }

/* schematic canvas */
.canvas { width: 2010px; height: 870px; display: grid; grid-template: 836px 30px / 1974px 32px; border: 2px solid #909090; border-top-color: #636363; background: #eee; box-shadow: 0 2px #fff; }
.stage { position: relative; margin: 2px 0 0 2px; border: solid #888; border-width: 2px 0 0 2px; background: #f7f7f7; font-size: 22px; overflow: hidden; }
.vbar { border-left: 2px solid #e6e6e6; background: linear-gradient(90deg, #fafafa 26px, #eee 26px); padding: 4px 0 0 6px; }
.vbar i { display: block; width: 16px; height: 812px; border-radius: 8px; background: #c1c1c1; }
.hbar { border-top: 2px solid #e6e6e6; background: linear-gradient(#fafafa 26px, #eee 26px); padding: 6px 0 0 4px; }
.hbar i { display: block; width: 1811px; height: 16px; border-radius: 8px; background: #c1c1c1; }
.species { position: absolute; width: 202px; height: 62px; border: 2px solid #6f7b83; border-radius: 16px; background: #a8d4f2; display: flex; flex-direction: column; align-items: center; line-height: 28px; }
.species em { margin-top: -4px; height: 32px; }
.t-laci { letter-spacing: .3px; }
.t-in { letter-spacing: .5px; }
.t-tetr { letter-spacing: .9px; }
.t-out { letter-spacing: .6px; }
.t-gfp { letter-spacing: .3px; }
.s1 { left: 779px; top: 208px; }
.s2 { left: 499px; top: 694px; }
.s3 { left: 1067px; top: 698px; }
.promoter { position: absolute; left: 788px; top: 484px; width: 213px; height: 73px; border: 5px solid #0f0; }
.edge { position: absolute; left: 872px; top: 269px; width: 30px; height: 226px; }
.free { position: absolute; white-space: nowrap; line-height: 28px; }
.f-plac { left: 870px; top: 561px; letter-spacing: .3px; }
.f-cell { left: 1048px; top: 403px; letter-spacing: .6px; }

/* log */
.hsplit { height: 20px; flex: none; display: flex; align-items: center; justify-content: center; background: linear-gradient(#fff, #f6f6f6); }
.console { height: 298px; border: 2px solid #909090; border-top-color: #636363; background: linear-gradient(90deg, #f1f1f1, #fff 80px); padding: 1px 0 0 2px; }
.console p { height: 32px; line-height: 33px; white-space: nowrap; }
.t-c1 { letter-spacing: .35px; }
.t-c3 { letter-spacing: .18px; }
.t-c4 { letter-spacing: .83px; }
.t-c5 { letter-spacing: .29px; }
```
